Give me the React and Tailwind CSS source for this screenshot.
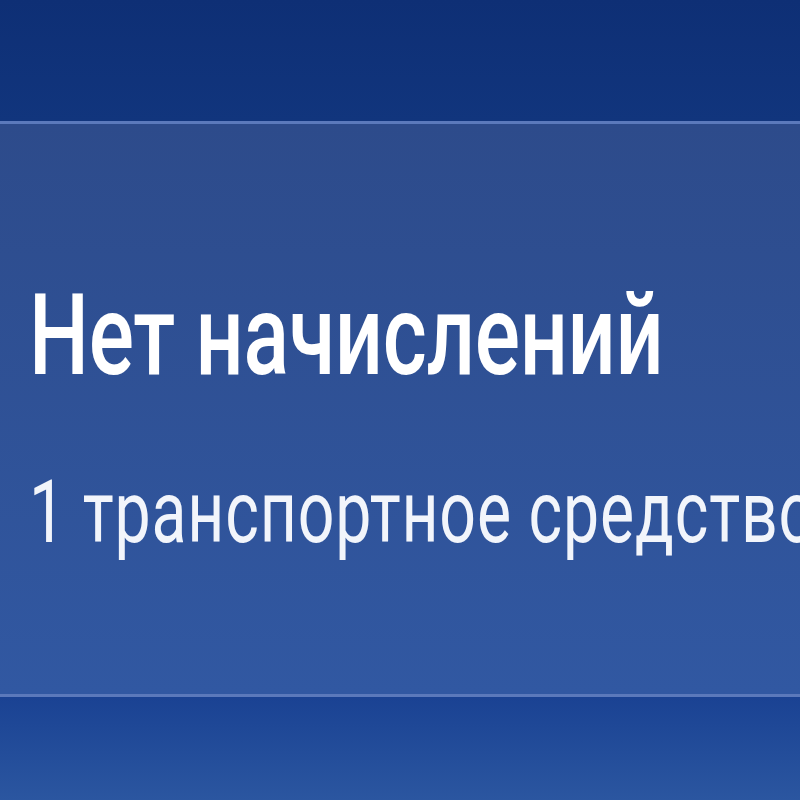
import React from "react";

export default function App() {
  return (
    <div className="w-[800px] h-[800px] overflow-hidden flex flex-col bg-[#0f3177] font-['Roboto',sans-serif]">
      {/* top band */}
      <div className="h-[121px] shrink-0 bg-gradient-to-b from-[#0e2f75] to-[#11357d]" />

      {/* card */}
      <div className="h-[576px] shrink-0 flex flex-col border-t-[3px] border-b-[3px] border-[#5b79bb] bg-gradient-to-b from-[#2d4b8b] to-[#3158a2] pl-[29px]">
        <div className="mt-[155px] origin-top-left scale-y-[1.35] text-white">
          <div className="text-[84.5px] leading-none font-medium tracking-[-0.3px] whitespace-nowrap">
            Нет начислений
          </div>
          <div className="mt-[56px] text-[64.4px] leading-none font-normal tracking-[0.8px] whitespace-nowrap text-[#f2f5fb]">
            1 транспортное средство
          </div>
        </div>
      </div>

      {/* bottom band */}
      <div className="flex-1 bg-gradient-to-b from-[#1a4293] to-[#2b56a0]" />
    </div>
  );
}
